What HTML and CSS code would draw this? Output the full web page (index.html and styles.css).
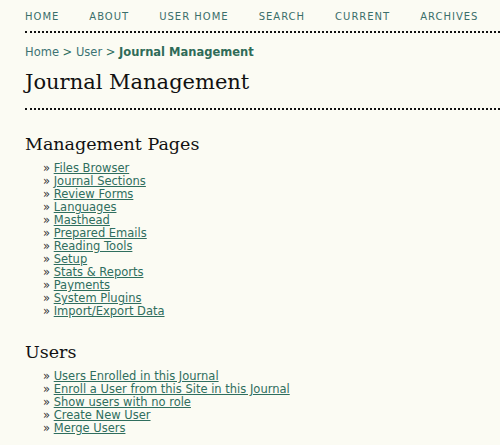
FILE: index.html
```html
<!DOCTYPE html>
<html>
<head>
<meta charset="utf-8">
<link rel="stylesheet" href="styles.css">
</head>
<body>
<div class="page">
  <nav class="navbar">
    <a href="#">Home</a>
    <a href="#">About</a>
    <a href="#">User Home</a>
    <a href="#">Search</a>
    <a href="#">Current</a>
    <a href="#">Archives</a>
  </nav>
  <div class="breadcrumb">
    <a href="#">Home</a> &gt; <a href="#">User</a> &gt; <a href="#" class="current">Journal Management</a>
  </div>
  <h2 class="title">Journal Management</h2>
  <div class="content">
    <h3 class="section-title">Management Pages</h3>
    <ul class="plain">
      <li>&#187; <a href="#">Files Browser</a></li>
      <li>&#187; <a href="#">Journal Sections</a></li>
      <li>&#187; <a href="#">Review Forms</a></li>
      <li>&#187; <a href="#">Languages</a></li>
      <li>&#187; <a href="#">Masthead</a></li>
      <li>&#187; <a href="#">Prepared Emails</a></li>
      <li>&#187; <a href="#">Reading Tools</a></li>
      <li>&#187; <a href="#">Setup</a></li>
      <li>&#187; <a href="#">Stats &amp; Reports</a></li>
      <li>&#187; <a href="#">Payments</a></li>
      <li>&#187; <a href="#">System Plugins</a></li>
      <li>&#187; <a href="#">Import/Export Data</a></li>
    </ul>
    <h3 class="section-title users">Users</h3>
    <ul class="plain">
      <li>&#187; <a href="#">Users Enrolled in this Journal</a></li>
      <li>&#187; <a href="#">Enroll a User from this Site in this Journal</a></li>
      <li>&#187; <a href="#">Show users with no role</a></li>
      <li>&#187; <a href="#">Create New User</a></li>
      <li>&#187; <a href="#">Merge Users</a></li>
    </ul>
  </div>
</div>
</body>
</html>
```

FILE: styles.css
```css
html, body {
  margin: 0;
  padding: 0;
  background: #fbfbf3;
}
body {
  font-family: "DejaVu Sans", Verdana, sans-serif;
  font-size: 11.5px;
  color: #222;
}
.page {
  padding-left: 25px;
  overflow: hidden;
}
a {
  color: #2f6e5e;
}
.navbar {
  display: flex;
  gap: 30px;
  padding-top: 11px;
  padding-bottom: 8px;
  border-bottom: 2px dotted #111;
}
.navbar a {
  text-decoration: none;
  text-transform: uppercase;
  letter-spacing: 0.1em;
  font-size: 10px;
  line-height: 12px;
  color: #3a6e6a;
}
.breadcrumb {
  margin-top: 12px;
  line-height: 14px;
  color: #2f6e5e;
}
.breadcrumb a {
  text-decoration: none;
  color: #3d7373;
}
.breadcrumb a.current {
  font-weight: bold;
  color: #2f6b58;
}
.title {
  font-family: "DejaVu Serif", Georgia, serif;
  font-weight: normal;
  font-size: 21px;
  line-height: 28px;
  margin: 9px 0 0;
  padding-bottom: 12px;
  border-bottom: 2px dotted #111;
  color: #111;
}
.section-title {
  font-family: "DejaVu Serif", Georgia, serif;
  font-weight: normal;
  font-size: 17.5px;
  line-height: 24px;
  margin: 22px 0 6px;
  color: #111;
}
.section-title.users {
  margin-top: 22px;
}
.plain {
  list-style: none;
  margin: 0;
  padding-left: 18px;
}
.plain li {
  line-height: 13px;
  color: #333;
}
.plain li a {
  color: #2f6e5e;
}
```
